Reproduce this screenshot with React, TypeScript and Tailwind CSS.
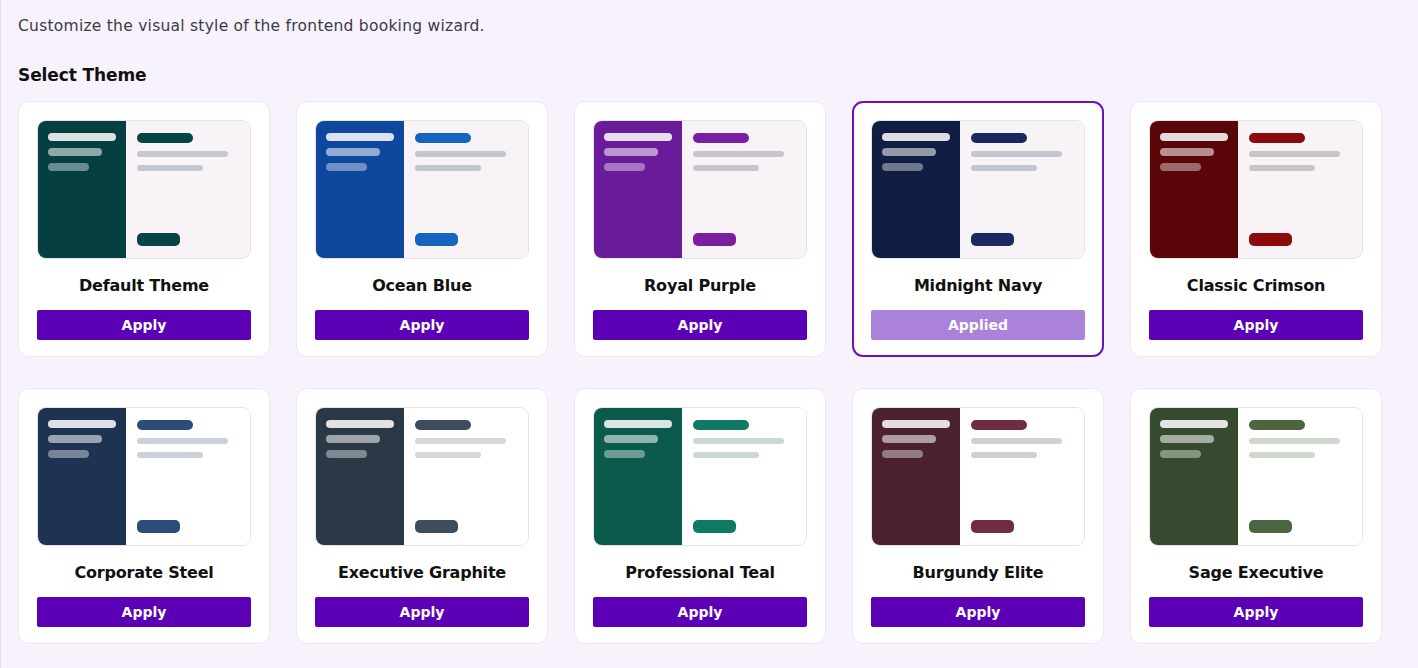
import { useState } from "react";

type Theme = {
  name: string;
  side: string;
  accent: string;
  line: string;
  pane: string;
};

const themes: Theme[] = [
  { name: "Default Theme", side: "bg-[#053f3f]", accent: "bg-[#054444]", line: "bg-[#c4c8d2]", pane: "bg-[#f8f3f7]" },
  { name: "Ocean Blue", side: "bg-[#0e479e]", accent: "bg-[#1565c0]", line: "bg-[#c1c6cb]", pane: "bg-[#f8f3f7]" },
  { name: "Royal Purple", side: "bg-[#6a1b9a]", accent: "bg-[#7b1fa2]", line: "bg-[#c6c6cc]", pane: "bg-[#f8f3f7]" },
  { name: "Midnight Navy", side: "bg-[#0f1e42]", accent: "bg-[#1a2a5e]", line: "bg-[#c2c5d2]", pane: "bg-[#f8f3f7]" },
  { name: "Classic Crimson", side: "bg-[#5a0609]", accent: "bg-[#8b0a0c]", line: "bg-[#cbc3c5]", pane: "bg-[#f8f3f7]" },
  { name: "Corporate Steel", side: "bg-[#1e3352]", accent: "bg-[#2c4c7c]", line: "bg-[#cbd1d9]", pane: "bg-white" },
  { name: "Executive Graphite", side: "bg-[#2b3845]", accent: "bg-[#3d4d5d]", line: "bg-[#d4d8dc]", pane: "bg-white" },
  { name: "Professional Teal", side: "bg-[#0a5b4b]", accent: "bg-[#0e7a64]", line: "bg-[#cbd8d5]", pane: "bg-white" },
  { name: "Burgundy Elite", side: "bg-[#4b2132]", accent: "bg-[#6e2d45]", line: "bg-[#d6cfd2]", pane: "bg-white" },
  { name: "Sage Executive", side: "bg-[#364a2f]", accent: "bg-[#4b6641]", line: "bg-[#d0d8ce]", pane: "bg-white" },
];

function Preview({ theme }: { theme: Theme }) {
  return (
    <div className="flex h-[139px] overflow-hidden rounded-[9px] border border-[#e6e2ea]">
      <div className={`w-[88px] shrink-0 pl-[10px] pt-[12px] flex flex-col gap-[7px] ${theme.side}`}>
        <div className="h-[8px] w-[68px] rounded-full bg-white/85" />
        <div className="h-[8px] w-[54px] rounded-full bg-white/55" />
        <div className="h-[8px] w-[41px] rounded-full bg-white/40" />
      </div>
      <div className={`flex flex-1 flex-col pl-[11px] pt-[12px] pb-[12px] ${theme.pane}`}>
        <div className={`h-[10px] w-[56px] rounded-full ${theme.accent}`} />
        <div className={`mt-[8px] h-[6px] w-[91px] rounded-full ${theme.line}`} />
        <div className={`mt-[8px] h-[6px] w-[66px] rounded-full ${theme.line}`} />
        <div className={`mt-auto h-[13px] w-[43px] rounded-[5px] ${theme.accent}`} />
      </div>
    </div>
  );
}

function ThemeCard({ theme, applied, onApply }: { theme: Theme; applied: boolean; onApply: () => void }) {
  return (
    <div
      className={`flex h-[256px] flex-col rounded-[11px] bg-white ${
        applied ? "border-2 border-[#6a12c0] px-[17px] pt-[17px]" : "border border-[#ece8f1] px-[18px] pt-[18px]"
      }`}
    >
      <Preview theme={theme} />
      <div className="mt-[15px] text-center text-[16px] font-bold leading-[24px] tracking-[-0.2px] text-[#111]">
        {theme.name}
      </div>
      <button
        onClick={onApply}
        className={`mt-[12px] h-[30px] w-full rounded-[2px] text-[14px] font-semibold text-white ${
          applied ? "bg-[#ab82da]" : "bg-[#5c00b6]"
        }`}
      >
        {applied ? "Applied" : "Apply"}
      </button>
    </div>
  );
}

export default function App() {
  const [active, setActive] = useState("Midnight Navy");

  return (
    <div
      className="min-h-screen border-l border-[#e3dcec] bg-[#f7f2fc] px-[17px] pt-[14px]"
      style={{ fontFamily: "'DejaVu Sans', sans-serif" }}
    >
      <p className="text-[15.5px] leading-[24px] tracking-[0.25px] text-[#3b3b48]">
        Customize the visual style of the frontend booking wizard.
      </p>
      <h2 className="mt-[24px] text-[17px] font-bold leading-[26px] tracking-[-0.1px] text-[#111]">Select Theme</h2>
      <div className="mt-[13px] grid grid-cols-[repeat(5,252px)] gap-x-[26px] gap-y-[31px]">
        {themes.map((t) => (
          <ThemeCard key={t.name} theme={t} applied={active === t.name} onApply={() => setActive(t.name)} />
        ))}
      </div>
    </div>
  );
}
